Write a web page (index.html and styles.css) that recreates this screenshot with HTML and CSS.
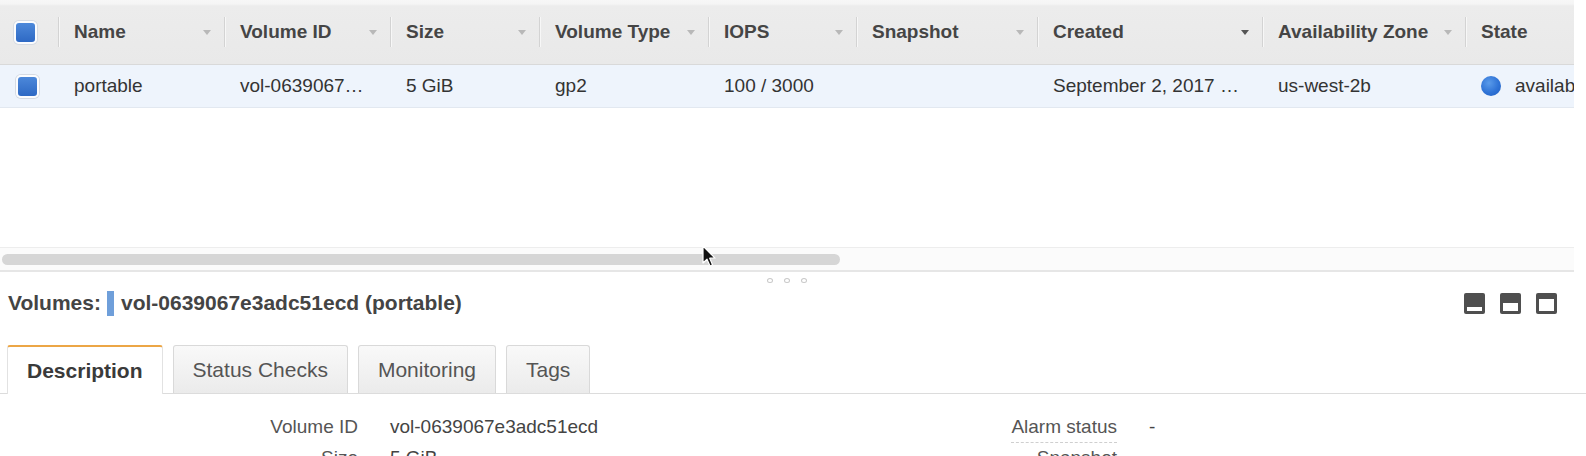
FILE: index.html
```html
<!DOCTYPE html>
<html>
<head>
<meta charset="utf-8">
<title>Volumes</title>
<link rel="stylesheet" href="styles.css">
</head>
<body>
<div class="page">
  <div class="grid-pane">
    <div class="row cols head">
      <div class="th th-check"><span class="check"></span></div>
      <div class="th"><div class="th-in"><span>Name</span><i class="arrow"></i></div></div>
      <div class="th"><div class="th-in"><span>Volume ID</span><i class="arrow"></i></div></div>
      <div class="th"><div class="th-in"><span>Size</span><i class="arrow"></i></div></div>
      <div class="th"><div class="th-in"><span>Volume Type</span><i class="arrow"></i></div></div>
      <div class="th"><div class="th-in"><span>IOPS</span><i class="arrow"></i></div></div>
      <div class="th"><div class="th-in"><span>Snapshot</span><i class="arrow"></i></div></div>
      <div class="th"><div class="th-in"><span>Created</span><i class="arrow dark"></i></div></div>
      <div class="th"><div class="th-in"><span>Availability Zone</span><i class="arrow"></i></div></div>
      <div class="th"><div class="th-in"><span>State</span></div></div>
    </div>
    <div class="row cols body-row">
      <div class="td td-check"><span class="check"></span></div>
      <div class="td">portable</div>
      <div class="td">vol-0639067…</div>
      <div class="td">5 GiB</div>
      <div class="td">gp2</div>
      <div class="td">100 / 3000</div>
      <div class="td"></div>
      <div class="td">September 2, 2017 …</div>
      <div class="td">us-west-2b</div>
      <div class="td"><span class="state-dot"></span>available</div>
    </div>
    <div class="empty"></div>
    <div class="hscroll"><div class="thumb"></div></div>
  </div>

  <div class="splitter"><span class="grip"></span><span class="grip"></span><span class="grip"></span></div>

  <div class="detail-head">
    <div class="title">
      <span>Volumes:</span><span class="title-bar"></span><span>vol-0639067e3adc51ecd (portable)</span>
    </div>
    <div class="panel-icons">
      <svg width="21" height="21" viewBox="0 0 21 21"><rect x="0" y="0" width="21" height="21" rx="2" fill="#4f4f4f"/><rect x="3" y="14" width="15" height="4" fill="#fff"/></svg>
      <svg width="21" height="21" viewBox="0 0 21 21"><rect x="0" y="0" width="21" height="21" rx="2" fill="#4f4f4f"/><rect x="3" y="10" width="15" height="8" fill="#fff"/></svg>
      <svg width="21" height="21" viewBox="0 0 21 21"><rect x="0" y="0" width="21" height="21" rx="2" fill="#4f4f4f"/><rect x="3" y="6" width="15" height="12" fill="#fff"/></svg>
    </div>
  </div>

  <div class="tabs">
    <div class="tab active">Description</div>
    <div class="tab">Status Checks</div>
    <div class="tab">Monitoring</div>
    <div class="tab">Tags</div>
  </div>

  <div class="desc">
    <div class="lbl">Volume ID</div>
    <div class="val">vol-0639067e3adc51ecd</div>
    <div class="lbl"><span class="dashed">Alarm status</span></div>
    <div class="val">-</div>
    <div class="lbl">Size</div>
    <div class="val">5 GiB</div>
    <div class="lbl">Snapshot</div>
    <div class="val"></div>
  </div>
</div>

<svg class="cursor" width="16" height="24" viewBox="0 0 16 24">
  <path d="M1 1 L1 18 L5 14.2 L8 21 L10.6 19.9 L7.7 13.2 L13 13.2 Z" fill="#111" stroke="#fff" stroke-width="1.2" stroke-linejoin="round"/>
</svg>
</body>
</html>
```

FILE: styles.css
```css
html, body {
  margin: 0;
  padding: 0;
  background: #ffffff;
}

body {
  width: 1586px;
  height: 456px;
  overflow: hidden;
  position: relative;
  font-family: "Liberation Sans", Arial, Helvetica, sans-serif;
  color: #333;
}

.page {
  display: flex;
  flex-direction: column;
}

.grid-pane {
  width: 1574px;
  overflow: hidden;
  display: flex;
  flex-direction: column;
}

.cols {
  display: grid;
  grid-template-columns: 58px 166px 166px 149px 169px 148px 181px 225px 203px 160px;
}

.head {
  height: 64px;
  border-bottom: 1px solid #d9d9d9;
  background: linear-gradient(to bottom, #f7f7f7 0px, #f5f5f5 4px, #ececec 6px, #e9e9e9 100%);
}

.th {
  display: flex;
  align-items: center;
  min-width: 0;
}

.th-in {
  flex: 1;
  height: 30px;
  border-left: 1px solid #d3d3d3;
  box-shadow: inset 1px 0 0 #f7f7f7;
  display: flex;
  align-items: center;
  justify-content: space-between;
  padding: 0 13px 0 15px;
  font-size: 19px;
  font-weight: bold;
  color: #454545;
  white-space: nowrap;
}

.th-check,
.td-check {
  padding-left: 14px;
}

.check {
  display: block;
  width: 19px;
  height: 19px;
  border-radius: 5px;
  border: 2px solid #fbfcfe;
  box-shadow: 0 0 0 1px #d6dbe3;
  background: linear-gradient(to bottom, #4c88da, #2e69c4);
}

.arrow {
  display: block;
  width: 0;
  height: 0;
  border-left: 4px solid transparent;
  border-right: 4px solid transparent;
  border-top: 5px solid #b8b8b8;
}

.arrow.dark {
  border-top-color: #555;
}

.body-row {
  height: 42px;
  background: #eef4fc;
  border-bottom: 1px solid #e2e8f0;
}

.td {
  display: flex;
  align-items: center;
  padding-left: 16px;
  font-size: 19px;
  color: #333;
  white-space: nowrap;
  overflow: hidden;
  min-width: 0;
}

.state-dot {
  display: inline-block;
  width: 20px;
  height: 20px;
  border-radius: 50%;
  margin-right: 14px;
  background: radial-gradient(circle at 40% 35%, #5a9bea 0%, #2f73d6 55%, #1f5ec0 100%);
}

.empty {
  height: 139px;
}

.hscroll {
  height: 16px;
  border-top: 1px solid #ededed;
  border-bottom: 2px solid #e6e6e6;
  background: #fbfbfb;
  padding: 6px 0 0 2px;
}

.thumb {
  width: 838px;
  height: 11px;
  border-radius: 6px;
  background: #d6d6d6;
}

.splitter {
  height: 16px;
  width: 1574px;
  display: flex;
  align-items: center;
  justify-content: center;
  gap: 11px;
}

.grip {
  display: block;
  width: 4px;
  height: 3px;
  border: 1px solid #c8c8c8;
  border-radius: 50%;
}

.detail-head {
  height: 30px;
  display: flex;
  align-items: center;
  justify-content: space-between;
  padding: 0 29px 0 8px;
}

.title {
  display: flex;
  align-items: center;
  font-size: 21px;
  font-weight: bold;
  color: #444;
  white-space: nowrap;
}

.title-bar {
  display: block;
  width: 7px;
  height: 25px;
  margin: 0 7px 0 6px;
  background: #6f9fda;
}

.panel-icons {
  display: flex;
  gap: 15px;
}

.panel-icons svg {
  display: block;
}

.tabs {
  margin-top: 27px;
  height: 48px;
  display: flex;
  align-items: flex-end;
  gap: 10px;
  padding-left: 7px;
  border-bottom: 1px solid #dcdcdc;
}

.tab {
  height: 47px;
  padding: 0 19px;
  display: flex;
  align-items: center;
  font-size: 21px;
  color: #555;
  border: 1px solid #d9d9d9;
  border-bottom: none;
  border-radius: 3px 3px 0 0;
  background: linear-gradient(to bottom, #f9f9f9, #ebebeb);
}

.tab.active {
  height: 47px;
  margin-bottom: -1px;
  border-top: 2px solid #eca646;
  border-left-color: #e2e2e2;
  border-right-color: #e2e2e2;
  background: #ffffff;
  font-weight: bold;
  color: #3a3a3a;
}

.desc {
  display: grid;
  grid-template-columns: 358px 585px 110px 1fr;
  column-gap: 32px;
  grid-auto-rows: 31px;
  padding-top: 17px;
  font-size: 19px;
}

.lbl {
  text-align: right;
  color: #555;
  white-space: nowrap;
  line-height: 31px;
}

.val {
  color: #444;
  white-space: nowrap;
  line-height: 31px;
}

.dashed {
  display: inline-block;
  line-height: 22px;
  padding-bottom: 4px;
  border-bottom: 1px dashed #cfcfcf;
}

.cursor {
  position: absolute;
  left: 702px;
  top: 245px;
}
```
